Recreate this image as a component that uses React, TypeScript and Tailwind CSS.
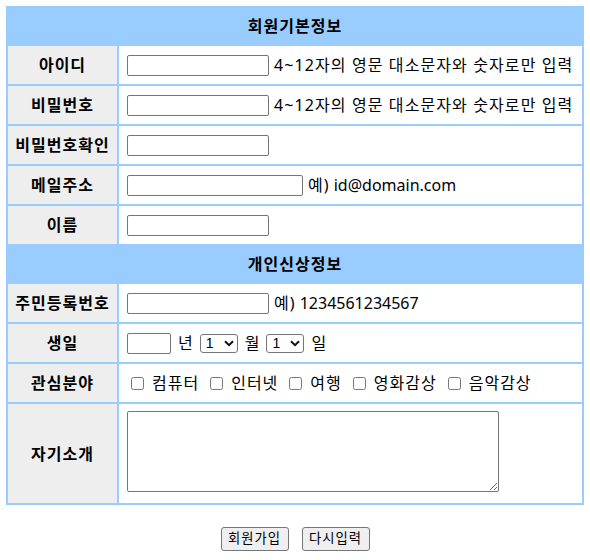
import React from "react";

const labelCls = "w-[111px] border border-[#99ccff] bg-[#eeeeee] text-center font-bold align-middle tracking-[1px]";
const fieldCls = "border border-[#99ccff] bg-white pl-[8px] align-middle";
const headCls = "h-[38px] border border-[#99ccff] bg-[#99ccff] text-center font-bold align-middle tracking-[1px]";
const inputCls = "h-[21px] border border-[#767676] rounded-[2px] bg-white px-[2px] text-[13.33px]";

function Select() {
    return (
        <div className="relative w-[38px] h-[19px]">
            <select className="block appearance-none w-full h-full border border-[#767676] rounded-[3px] bg-white pl-[5px] text-[14px] leading-none font-['Liberation_Sans',sans-serif]">
                {Array.from({ length: 12 }, (_, i) => (
                    <option key={i}>{i + 1}</option>
                ))}
            </select>
            <svg className="absolute right-[4px] top-[6px] pointer-events-none" width="10" height="7" viewBox="0 0 10 7">
                <path d="M1 1.2 L5 5.2 L9 1.2" fill="none" stroke="#111" strokeWidth="2" />
            </svg>
        </div>
    );
}

// 관심분야 항목
const INTERESTS = ["컴퓨터", "인터넷", "여행", "영화감상", "음악감상"];

export default function App() {
    return (
        <div className="p-[6px] font-['Noto_Sans','Noto_Sans_CJK_KR',sans-serif] text-base text-black">
            <table className="w-[578px] border border-[#99ccff] border-separate border-spacing-0">
                <tbody>
                    <tr>
                        <td colSpan={2} className={headCls}>회원기본정보</td>
                    </tr>
                    <tr className="h-[40px]">
                        <td className={labelCls}>아이디</td>
                        <td className={fieldCls}>
                            <div className="flex items-center">
                                <input type="text" className={`${inputCls} w-[142px]`} />
                                <span className="ml-[5px] tracking-[1.1px]">4~12자의 영문 대소문자와 숫자로만 입력</span>
                            </div>
                        </td>
                    </tr>
                    <tr className="h-[40px]">
                        <td className={labelCls}>비밀번호</td>
                        <td className={fieldCls}>
                            <div className="flex items-center">
                                <input type="password" className={`${inputCls} w-[142px]`} />
                                <span className="ml-[5px] tracking-[1.1px]">4~12자의 영문 대소문자와 숫자로만 입력</span>
                            </div>
                        </td>
                    </tr>
                    <tr className="h-[40px]">
                        <td className={labelCls}>비밀번호확인</td>
                        <td className={fieldCls}>
                            <div className="flex items-center">
                                <input type="password" className={`${inputCls} w-[142px]`} />
                            </div>
                        </td>
                    </tr>
                    <tr className="h-[40px]">
                        <td className={labelCls}>메일주소</td>
                        <td className={fieldCls}>
                            <div className="flex items-center">
                                <input type="text" className={`${inputCls} w-[176px]`} />
                                <span className="ml-[5px]"><span className="tracking-[1px]">예)</span> id@domain.com</span>
                            </div>
                        </td>
                    </tr>
                    <tr className="h-[40px]">
                        <td className={labelCls}>이름</td>
                        <td className={fieldCls}>
                            <div className="flex items-center">
                                <input type="text" className={`${inputCls} w-[142px]`} />
                            </div>
                        </td>
                    </tr>
                    <tr>
                        <td colSpan={2} className={headCls}>개인신상정보</td>
                    </tr>
                    <tr className="h-[40px]">
                        <td className={labelCls}>주민등록번호</td>
                        <td className={fieldCls}>
                            <div className="flex items-center">
                                <input type="text" className={`${inputCls} w-[142px]`} />
                                <span className="ml-[5px]"><span className="tracking-[1px]">예)</span> 1234561234567</span>
                            </div>
                        </td>
                    </tr>
                    <tr className="h-[40px]">
                        <td className={labelCls}>생일</td>
                        <td className={fieldCls}>
                            <div className="flex items-center gap-[7px]">
                                <input type="text" className={`${inputCls} w-[44px]`} />
                                <span>년</span>
                                <Select />
                                <span>월</span>
                                <Select />
                                <span>일</span>
                            </div>
                        </td>
                    </tr>
                    <tr className="h-[40px]">
                        <td className={labelCls}>관심분야</td>
                        <td className={fieldCls}>
                            <div className="flex items-center gap-[11px] pl-[4px]">
                                {INTERESTS.map((item) => (
                                    <label key={item} className="flex items-center gap-[8px]">
                                        <input type="checkbox" className="w-[13px] h-[13px]" />
                                        <span className="tracking-[1px]">{item}</span>
                                    </label>
                                ))}
                            </div>
                        </td>
                    </tr>
                    <tr>
                        <td className={labelCls}>자기소개</td>
                        <td className={`${fieldCls} pt-[7px] pb-[11px]`}>
                            <textarea className="block w-[372px] h-[81px] border border-[#767676] rounded-[2px] bg-white text-[13.33px]" />
                        </td>
                    </tr>
                </tbody>
            </table>
            <div className="flex justify-center gap-[13px] mt-[22px]">
                <button type="submit" className="w-[68px] h-[24px] border border-[#767676] rounded-[3px] bg-[#efefef] text-[13.33px] tracking-[1px]">
                    회원가입
                </button>
                <button type="reset" className="w-[68px] h-[24px] border border-[#767676] rounded-[3px] bg-[#efefef] text-[13.33px] tracking-[1px]">
                    다시입력
                </button>
            </div>
        </div>
    );
}
